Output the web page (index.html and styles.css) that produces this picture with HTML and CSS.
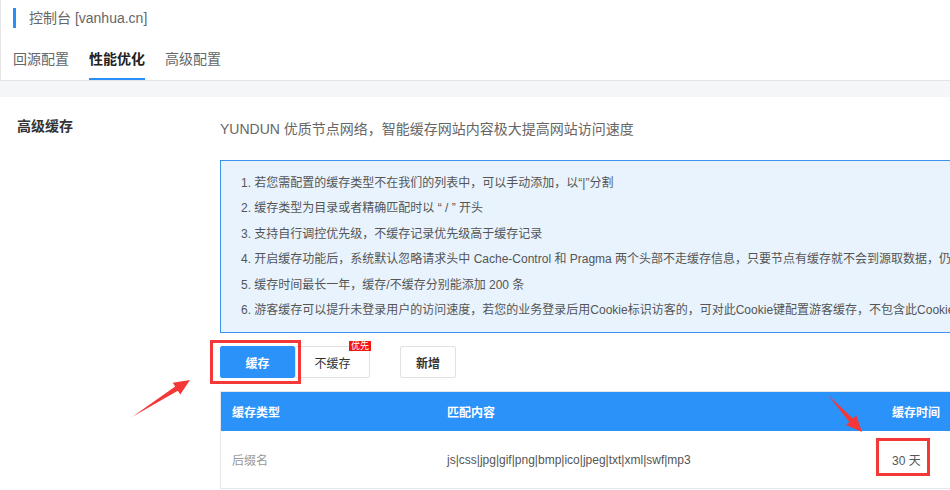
FILE: index.html
```html
<!DOCTYPE html>
<html lang="zh-CN">
<head>
    <meta charset="UTF-8">
    <title>控制台 - 性能优化</title>
    <link rel="stylesheet" href="styles.css">
</head>
<body>
    <!-- Header -->
    <div class="top">
        <div class="crumb">控制台 [vanhua.cn]</div>
        <div class="tabs">
            <a href="#" class="tab">回源配置</a>
            <a href="#" class="tab active">性能优化</a>
            <a href="#" class="tab">高级配置</a>
        </div>
    </div>
    <div class="gap"></div>

    <!-- Advanced cache -->
    <div class="section">
        <div class="label">高级缓存</div>
        <div class="main">
            <p class="desc">YUNDUN 优质节点网络，智能缓存网站内容极大提高网站访问速度</p>
            <div class="tips">
                <p>1. 若您需配置的缓存类型不在我们的列表中，可以手动添加，以“|”分割</p>
                <p>2. 缓存类型为目录或者精确匹配时以 “ / ” 开头</p>
                <p>3. 支持自行调控优先级，不缓存记录优先级高于缓存记录</p>
                <p>4. 开启缓存功能后，系统默认忽略请求头中 Cache-Control 和 Pragma 两个头部不走缓存信息，只要节点有缓存就不会到源取数据，仍会按照规则缓存</p>
                <p>5. 缓存时间最长一年，缓存/不缓存分别能添加 200 条</p>
                <p>6. 游客缓存可以提升未登录用户的访问速度，若您的业务登录后用Cookie标识访客的，可对此Cookie键配置游客缓存，不包含此Cookie的请求将被缓存</p>
            </div>
            <div class="actions">
                <div class="btn-group">
                    <button class="btn primary">缓存</button>
                    <button class="btn">不缓存<span class="badge">优先</span></button>
                </div>
                <button class="btn add">新增</button>
            </div>
            <table class="rules">
                <thead>
                    <tr>
                        <th class="c1">缓存类型</th>
                        <th class="c2">匹配内容</th>
                        <th class="c3">缓存时间</th>
                    </tr>
                </thead>
                <tbody>
                    <tr>
                        <td class="c1 muted">后缀名</td>
                        <td class="c2">js|css|jpg|gif|png|bmp|ico|jpeg|txt|xml|swf|mp3</td>
                        <td class="c3">30 天</td>
                    </tr>
                </tbody>
            </table>
        </div>
    </div>

    <!-- Screenshot annotations -->
    <svg class="marks" width="950" height="490" viewBox="0 0 950 490">
        <rect x="211.5" y="341.5" width="88" height="41" fill="none" stroke="#f43838" stroke-width="3"/>
        <rect x="877.5" y="439.5" width="51" height="35" fill="none" stroke="#f43838" stroke-width="3"/>
        <polygon fill="#f43838" points="132,417 175.2,386.5 172.7,382.7 190,380 180.3,394.5 177.8,390.7"/>
        <polygon fill="#f43838" points="828,395 852.9,418.5 856.3,415.4 862,432 845.9,425 849.3,421.9"/>
    </svg>
</body>
</html>
```

FILE: styles.css
```css
/* General */
html, body {
    margin: 0;
    padding: 0;
}

body {
    position: relative;
    width: 950px;
    height: 490px;
    overflow: hidden;
    font-family: "Liberation Sans", "Noto Sans CJK SC", sans-serif;
    color: #555;
    background: #fff;
}

p {
    margin: 0;
}

/* Header */
.top {
    height: 72px;
    padding-top: 8px;
    border-left: 1px solid #e3e3e3;
    border-bottom: 1px solid #e3e3e3;
}

.crumb {
    margin-left: 12px;
    padding-left: 13px;
    border-left: 3px solid #2a8ff7;
    height: 20px;
    line-height: 20px;
    font-size: 14px;
    color: #666;
}

.tabs {
    display: flex;
    gap: 20px;
    margin-top: 21px;
    padding-left: 12px;
}

.tab {
    font-size: 14px;
    line-height: 20px;
    padding-bottom: 9px;
    border-bottom: 2px solid transparent;
    color: #666;
    text-decoration: none;
}

.tab.active {
    color: #222;
    font-weight: bold;
    border-bottom-color: #2a8ff7;
}

.gap {
    height: 16px;
    background: #f5f6f8;
}

/* Section */
.section {
    display: flex;
    padding-top: 19px;
}

.label {
    flex: 0 0 203px;
    padding-left: 17px;
    font-size: 14px;
    line-height: 20px;
    font-weight: bold;
    color: #333;
}

.main {
    flex: 0 0 auto;
}

.desc {
    margin-top: 3px;
    font-size: 14px;
    line-height: 20px;
    color: #666;
}

.tips {
    margin-top: 21px;
    width: 760px;
    padding: 10px 20px 9px;
    border: 1px solid #3a94ee;
    background: #e8f3fd;
    font-size: 12px;
    line-height: 25.4px;
    color: #555;
    white-space: nowrap;
}

/* Buttons */
.actions {
    display: flex;
    gap: 30px;
    margin-top: 13px;
}

.btn-group {
    display: flex;
}

.btn {
    position: relative;
    width: 75px;
    height: 32px;
    border: 1px solid #e2e2e2;
    border-radius: 2px;
    background: #fff;
    font-family: inherit;
    font-size: 12px;
    color: #333;
    padding: 0;
}

.btn.primary {
    background: #2a92f8;
    border-color: #2a92f8;
    color: #fff;
    font-weight: bold;
}

.btn.add {
    width: 56px;
    font-weight: bold;
}

.badge {
    position: absolute;
    top: -6px;
    right: -2px;
    height: 10px;
    padding: 0 2px;
    line-height: 10px;
    font-size: 9px;
    color: #fff;
    background: #f41515;
}

/* Table */
.rules {
    margin-top: 13px;
    width: 762px;
    border-collapse: collapse;
    border: 1px solid #e4e8ec;
    font-size: 12px;
}

.rules th,
.rules td {
    padding: 0 11px;
    text-align: left;
}

.rules th {
    height: 39px;
    background: #2a92f8;
    color: #fff;
    font-weight: bold;
}

.rules td {
    height: 57px;
    color: #555;
}

.rules .c1 {
    width: 193px;
}

.rules .c2 {
    width: 423px;
}

.rules .muted {
    color: #999;
}

/* Annotations */
.marks {
    position: absolute;
    left: 0;
    top: 0;
    pointer-events: none;
}
```
